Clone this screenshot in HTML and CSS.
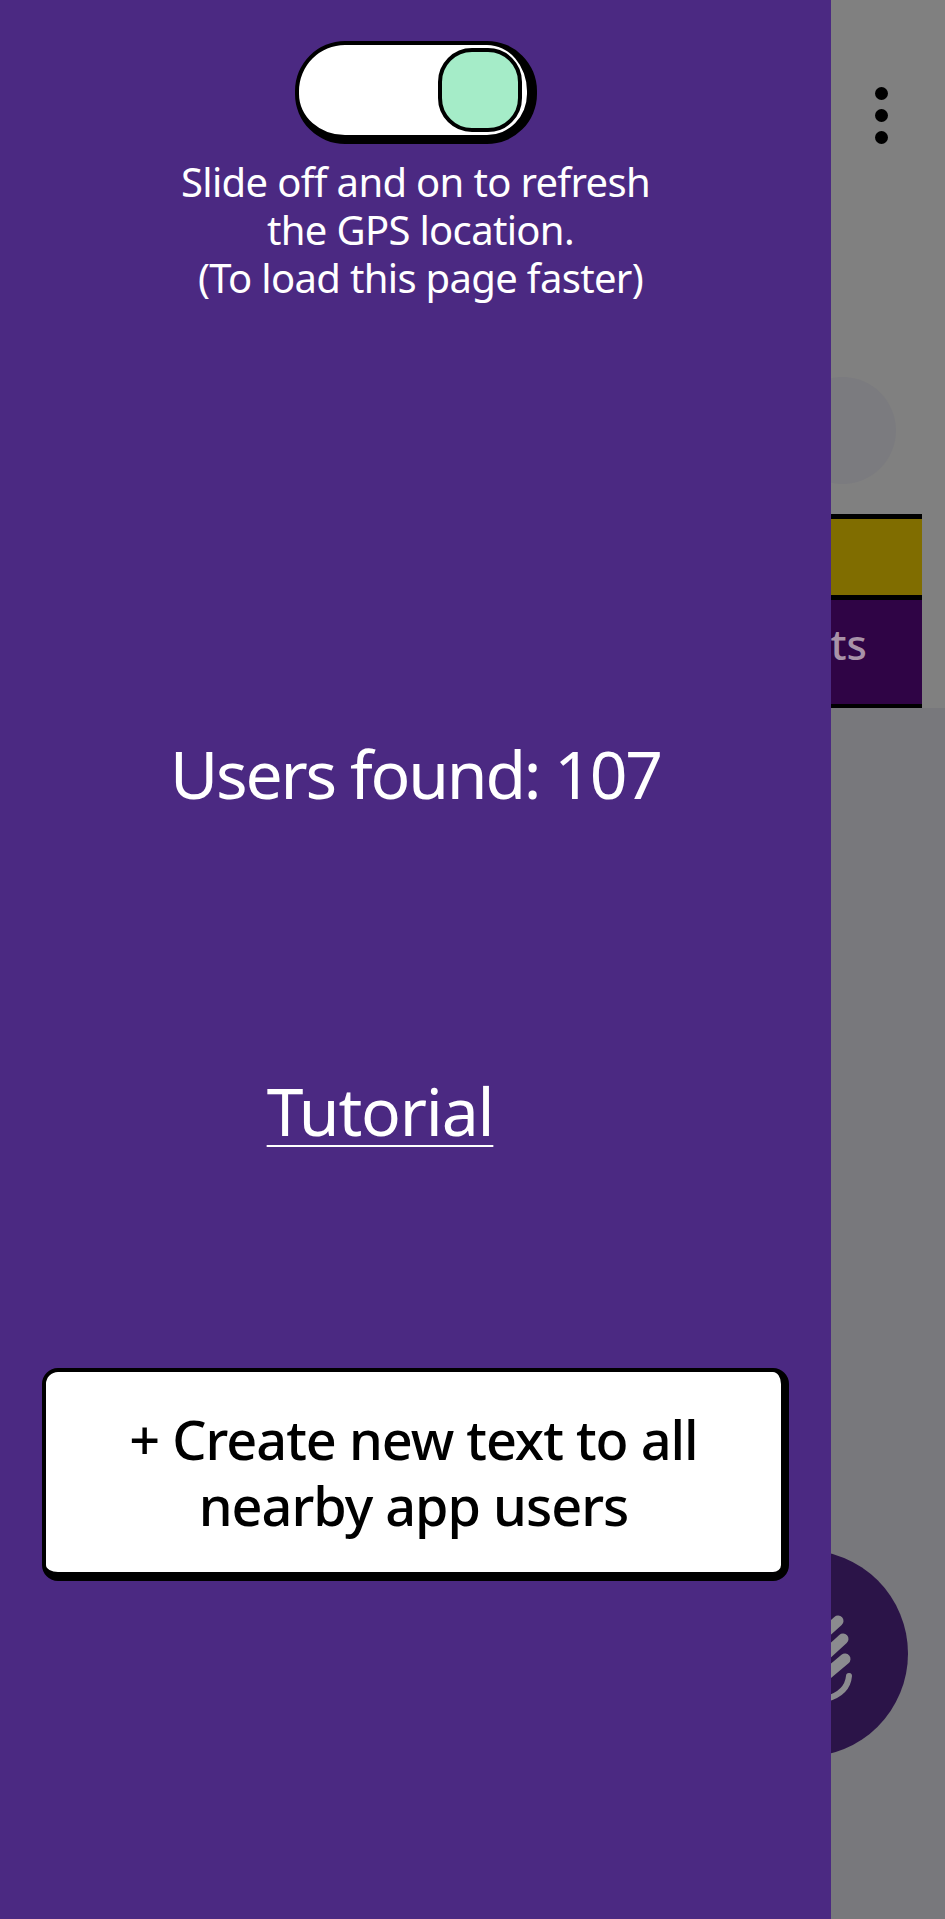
FILE: index.html
```html
<!DOCTYPE html>
<html lang="en">
<head>
    <meta charset="UTF-8">
    <meta name="viewport" content="width=device-width, initial-scale=1.0">
    <title>Nearby</title>
    <link rel="stylesheet" href="styles.css">
</head>
<body>
    <div class="app">
        <!-- page behind the drawer, dimmed -->
        <div class="page">
            <div class="page-top">
                <div class="menu-dots">
                    <span class="dot"></span>
                    <span class="dot"></span>
                    <span class="dot"></span>
                </div>
                <div class="avatar"></div>
                <div class="tabs">
                    <div class="tab tab-gold"></div>
                    <div class="tab tab-purple">Chats</div>
                </div>
            </div>
            <div class="fab">
                <svg class="fab-icon" width="207" height="207" viewBox="-7 -3 207 207" fill="none" stroke="#8b8b8f" stroke-linecap="round">
                    <path d="M110 86 L130 68" stroke-width="11"/>
                    <path d="M112 107 L135 86" stroke-width="11"/>
                    <path d="M112 127 L137 106" stroke-width="11"/>
                    <path d="M141 123 C140 134 133 142 118 146" stroke-width="6"/>
                </svg>
            </div>
        </div>

        <!-- side drawer -->
        <div class="drawer">
            <div class="switch">
                <div class="switch-knob"></div>
            </div>
            <div class="hint">
                <span class="hint-line">Slide off and on to refresh</span>
                <span class="hint-line hint-shift">the GPS location.</span>
                <span class="hint-line hint-shift">(To load this page faster)</span>
            </div>
            <p class="users-found">Users found: 107</p>
            <a class="tutorial-link" href="#">Tutorial</a>
            <button class="create-btn">+ Create new text to all nearby app users</button>
        </div>
    </div>
</body>
</html>
```

FILE: styles.css
```css
* {
    box-sizing: border-box;
}

body {
    margin: 0;
    font-family: "Noto Sans", "Open Sans", sans-serif;
}

.app {
    position: relative;
    width: 945px;
    height: 1919px;
    overflow: hidden;
    background-color: #78787c;
}

.page-top {
    height: 708px;
    background-color: #808080;
    display: flex;
    flex-direction: column;
    align-items: flex-end;
}

.menu-dots {
    display: flex;
    flex-direction: column;
    gap: 9px;
    margin: 87px 57px 0 0;
}

.dot {
    width: 13px;
    height: 13px;
    border-radius: 50%;
    background-color: #000;
}

.avatar {
    width: 107px;
    height: 107px;
    border-radius: 50%;
    background-color: #7b7b7f;
    margin: 233px 49px 0 0;
}

.tabs {
    width: 200px;
    margin: 30px 23px 0 0;
}

.tab {
    border-top: 5px solid #000;
}

.tab-gold {
    height: 81px;
    background-color: #806d00;
}

.tab-purple {
    height: 113px;
    background-color: #2f0445;
    border-bottom: 4px solid #000;
    color: #a892a8;
    font-size: 42px;
    font-weight: 500;
    line-height: 88px;
    text-align: right;
    padding-right: 55px;
}

.fab {
    position: absolute;
    left: 701px;
    top: 1550px;
    width: 207px;
    height: 207px;
    border-radius: 50%;
    background-color: #2b1448;
}

.fab-icon {
    display: block;
}

.drawer {
    position: absolute;
    left: 0;
    top: 0;
    width: 831px;
    height: 100%;
    background-color: #4b2982;
    color: #fff;
    display: flex;
    flex-direction: column;
    align-items: center;
    padding-top: 41px;
}

.switch {
    width: 242px;
    height: 103px;
    border-style: solid;
    border-color: #000;
    border-width: 4px 10px 9px 4px;
    border-radius: 50px;
    background-color: #fff;
    display: flex;
    align-items: center;
    justify-content: flex-end;
    padding-right: 5px;
}

.switch-knob {
    width: 84px;
    height: 84px;
    border: 4px solid #000;
    border-radius: 34px;
    background-color: #a5ecc8;
}

.hint {
    margin-top: 14px;
    font-size: 40px;
    font-weight: 400;
    letter-spacing: -0.67px;
    line-height: 48px;
    text-align: center;
}

.hint-line {
    display: block;
}

.hint-shift {
    padding-left: 10px;
}

.users-found {
    margin: 429px 0 0;
    font-size: 66px;
    font-weight: 400;
    letter-spacing: -2.2px;
    line-height: 84px;
}

.tutorial-link {
    margin: 253px 71px 0 0;
    font-size: 66px;
    font-weight: 400;
    letter-spacing: -1.2px;
    line-height: 84px;
    color: #fff;
    text-decoration: underline;
    text-decoration-thickness: 2px;
    text-underline-offset: 9px;
}

.create-btn {
    width: 747px;
    height: 213px;
    margin-top: 216px;
    padding: 0 60px;
    border-style: solid;
    border-color: #000;
    border-width: 4px 8px 9px 4px;
    border-radius: 16px;
    background-color: #fff;
    color: #000;
    font-family: inherit;
    font-size: 54px;
    font-weight: 500;
    letter-spacing: -1px;
    line-height: 66px;
    text-align: center;
}
```
